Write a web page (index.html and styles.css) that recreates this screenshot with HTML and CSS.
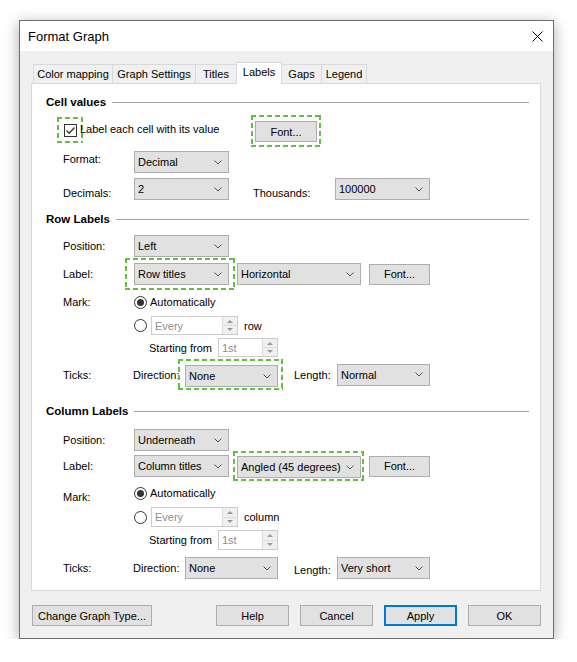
FILE: index.html
```html
<!DOCTYPE html>
<html>
<head>
<meta charset="utf-8">
<title>Format Graph</title>
<link rel="stylesheet" href="styles.css">
</head>
<body>
<div class="dialog">
  <div class="titlebar">
    <span class="title">Format Graph</span>
    <svg class="close" viewBox="0 0 11 11"><path d="M0.5 0.5 L10.5 10.5 M10.5 0.5 L0.5 10.5"/></svg>
  </div>
  <div class="body">
    <div class="tabs">
      <div class="tab t1">Color mapping</div>
      <div class="tab t2">Graph Settings</div>
      <div class="tab t3">Titles</div>
      <div class="tab t4 active">Labels</div>
      <div class="tab t5">Gaps</div>
      <div class="tab t6">Legend</div>
    </div>
    <div class="panel">
      <div class="heading">Cell values</div>
      <div class="row r-check">
        <div class="hl hl-check">
          <svg class="cb" viewBox="0 0 13 13"><rect x="0.5" y="0.5" width="12" height="12"/><polyline points="2.5,6.5 5.2,9.2 10.5,3.5"/></svg>
        </div>
        <span class="cb-text">Label each cell with its value</span>
        <div class="hl hl-font"><div class="btn w62">Font...</div></div>
      </div>
      <div class="row r-format">
        <span class="lbl hi">Format:</span>
        <div class="combo w95"><span>Decimal</span><svg class="chev" viewBox="0 0 8 5"><polyline points="0.5,0.5 4,4 7.5,0.5"/></svg></div>
      </div>
      <div class="row r-dec">
        <span class="lbl lo">Decimals:</span>
        <div class="combo w95"><span>2</span><svg class="chev" viewBox="0 0 8 5"><polyline points="0.5,0.5 4,4 7.5,0.5"/></svg></div>
        <span class="thou lo">Thousands:</span>
        <div class="combo w95"><span>100000</span><svg class="chev" viewBox="0 0 8 5"><polyline points="0.5,0.5 4,4 7.5,0.5"/></svg></div>
      </div>

      <div class="heading h2">Row Labels</div>
      <div class="row r-pos">
        <span class="lbl">Position:</span>
        <div class="combo w95"><span>Left</span><svg class="chev" viewBox="0 0 8 5"><polyline points="0.5,0.5 4,4 7.5,0.5"/></svg></div>
      </div>
      <div class="row r-label">
        <span class="lbl lbl-short">Label:</span>
        <div class="hl hl-row"><div class="combo w95"><span>Row titles</span><svg class="chev" viewBox="0 0 8 5"><polyline points="0.5,0.5 4,4 7.5,0.5"/></svg></div></div>
        <div class="combo w124 ml2"><span>Horizontal</span><svg class="chev" viewBox="0 0 8 5"><polyline points="0.5,0.5 4,4 7.5,0.5"/></svg></div>
        <div class="btn w61 ml8">Font...</div>
      </div>
      <div class="row r-mark">
        <span class="lbl">Mark:</span>
        <svg class="radio" viewBox="0 0 13 13"><circle cx="6.5" cy="6.5" r="6"/><circle class="dot" cx="6.5" cy="6.5" r="3.5"/></svg>
        <span class="auto">Automatically</span>
      </div>
      <div class="row r-every">
        <span class="lbl"></span>
        <svg class="radio" viewBox="0 0 13 13"><circle cx="6.5" cy="6.5" r="6"/></svg>
        <div class="spin w87"><span>Every</span><div class="spbtns"><div class="sp up"></div><div class="sp dn"></div></div></div>
        <span class="unit">row</span>
      </div>
      <div class="row r-start">
        <span class="lbl"></span>
        <span class="start">Starting from</span>
        <div class="spin w60"><span>1st</span><div class="spbtns"><div class="sp up"></div><div class="sp dn"></div></div></div>
      </div>
      <div class="row r-ticks">
        <span class="lbl lbl-ticks">Ticks:</span>
        <span class="dir">Direction:</span>
        <div class="hl hl-dir"><div class="combo w93"><span>None</span><svg class="chev" viewBox="0 0 8 5"><polyline points="0.5,0.5 4,4 7.5,0.5"/></svg></div></div>
        <span class="len">Length:</span>
        <div class="combo w93"><span>Normal</span><svg class="chev" viewBox="0 0 8 5"><polyline points="0.5,0.5 4,4 7.5,0.5"/></svg></div>
      </div>

      <div class="heading h3">Column Labels</div>
      <div class="row r-pos2">
        <span class="lbl">Position:</span>
        <div class="combo w95"><span>Underneath</span><svg class="chev" viewBox="0 0 8 5"><polyline points="0.5,0.5 4,4 7.5,0.5"/></svg></div>
      </div>
      <div class="row r-label2">
        <span class="lbl">Label:</span>
        <div class="combo w95"><span>Column titles</span><svg class="chev" viewBox="0 0 8 5"><polyline points="0.5,0.5 4,4 7.5,0.5"/></svg></div>
        <div class="hl hl-ang"><div class="combo w124"><span>Angled (45 degrees)</span><svg class="chev" viewBox="0 0 8 5"><polyline points="0.5,0.5 4,4 7.5,0.5"/></svg></div></div>
        <div class="btn w61 ml5">Font...</div>
      </div>
      <div class="row r-mark2">
        <span class="lbl low">Mark:</span>
        <svg class="radio" viewBox="0 0 13 13"><circle cx="6.5" cy="6.5" r="6"/><circle class="dot" cx="6.5" cy="6.5" r="3.5"/></svg>
        <span class="auto">Automatically</span>
      </div>
      <div class="row r-every2">
        <span class="lbl"></span>
        <svg class="radio" viewBox="0 0 13 13"><circle cx="6.5" cy="6.5" r="6"/></svg>
        <div class="spin w87"><span>Every</span><div class="spbtns"><div class="sp up"></div><div class="sp dn"></div></div></div>
        <span class="unit">column</span>
      </div>
      <div class="row r-start2">
        <span class="lbl"></span>
        <span class="start">Starting from</span>
        <div class="spin w60"><span>1st</span><div class="spbtns"><div class="sp up"></div><div class="sp dn"></div></div></div>
      </div>
      <div class="row r-ticks2">
        <span class="lbl lbl-ticks">Ticks:</span>
        <span class="dir2">Direction:</span>
        <div class="combo w93"><span>None</span><svg class="chev" viewBox="0 0 8 5"><polyline points="0.5,0.5 4,4 7.5,0.5"/></svg></div>
        <span class="len2 low">Length:</span>
        <div class="combo w93"><span>Very short</span><svg class="chev" viewBox="0 0 8 5"><polyline points="0.5,0.5 4,4 7.5,0.5"/></svg></div>
      </div>
    </div>
    <div class="buttons">
      <div class="btn w120">Change Graph Type...</div>
      <div class="spacer"></div>
      <div class="btn w73">Help</div>
      <div class="btn w73 ml11">Cancel</div>
      <div class="btn w73 ml11 default">Apply</div>
      <div class="btn w73 ml11">OK</div>
    </div>
  </div>
</div>
</body>
</html>
```
FILE: styles.css
```css
* { box-sizing: border-box; }
html, body { margin: 0; padding: 0; background: #ffffff; }
body {
  font-family: "Liberation Sans", Arial, sans-serif;
  font-size: 11px;
  color: #000;
}
.dialog {
  margin: 20px 0 0 19px;
  width: 535px;
  height: 619px;
  border: 1px solid #6e6e6e;
  box-shadow: 0 3px 14px rgba(0, 0, 0, 0.33);
  background: #f0f0f0;
  display: flex;
  flex-direction: column;
}
.titlebar {
  height: 30px;
  flex: none;
  background: #fff;
  display: flex;
  align-items: center;
  justify-content: space-between;
  padding: 0 10px 0 8px;
}
.title { font-size: 13px; }
.close { width: 11px; height: 11px; }
.close path { stroke: #000; stroke-width: 1; fill: none; }

.body { flex: 1; padding: 11px 12px 0 11px; }

.tabs { display: flex; align-items: flex-end; height: 21px; padding-left: 2px; }
.tab {
  height: 19px;
  border: 1px solid #d9d9d9;
  border-bottom: none;
  margin-left: -1px;
  background: #f0f0f0;
  display: flex;
  align-items: center;
  justify-content: center;
}
.t1 { margin-left: 0; width: 80px; }
.t2 { width: 84px; }
.t3 { width: 42px; }
.t4 { width: 46px; }
.t5 { width: 41px; }
.t6 { width: 46px; }
.tab.active {
  height: 22px;
  background: #fff;
  margin-bottom: -1px;
  padding-bottom: 3px;
  position: relative;
  z-index: 1;
}

.panel {
  background: #fff;
  border: 1px solid #d9d9d9;
  padding-bottom: 11px;
}
.heading {
  display: flex;
  align-items: center;
  height: 20px;
  margin: 8px 11px 0 14px;
  font-weight: bold;
  font-size: 11.5px;
}
.heading::after {
  content: "";
  flex: 1;
  height: 1px;
  background: #a0a0a0;
  margin-left: 6px;
}
.h2 { margin-top: 9px; }
.h3 { margin-top: 11px; }

.row { display: flex; align-items: center; padding-left: 31px; }
.lbl { width: 71px; flex: none; }
.lbl-short { width: 62px; }
.lbl-ticks { width: 70px; }
.hi { align-self: flex-start; padding-top: 2px; }
.lo { align-self: flex-end; padding-bottom: 1px; }
.low { align-self: flex-end; }

.r-check { padding-left: 25px; height: 32px; margin-top: 3px; align-items: flex-start; }
.r-format { margin-top: 4px; height: 22px; }
.r-dec { margin-top: 5px; height: 22px; }
.r-pos { margin-top: 6px; height: 22px; }
.r-label { margin-top: 1px; height: 32px; }
.r-mark { margin-top: 2px; height: 20px; }
.r-every { margin-top: 4px; height: 19px; }
.r-start { margin-top: 3px; height: 19px; }
.r-ticks { margin-top: 2px; height: 31px; }
.r-pos2 { margin-top: 8px; height: 22px; }
.r-label2 { margin-top: 0; height: 30px; }
.r-mark2 { margin-top: 2px; height: 20px; }
.r-every2 { margin-top: 4px; height: 20px; }
.r-start2 { margin-top: 3px; height: 20px; }
.r-ticks2 { margin-top: 7px; height: 22px; }

/* dashed highlight frames */
.hl {
  flex: none;
  --g: #5fc23f;
  background-image:
    repeating-linear-gradient(90deg, var(--g) 0 5px, transparent 5px 8px),
    repeating-linear-gradient(90deg, var(--g) 0 5px, transparent 5px 8px),
    repeating-linear-gradient(180deg, var(--g) 0 5px, transparent 5px 8px),
    repeating-linear-gradient(180deg, var(--g) 0 5px, transparent 5px 8px);
  background-size: 100% 2px, 100% 2px, 2px 100%, 2px 100%;
  background-position: left top, left bottom, left top, right top;
  background-repeat: no-repeat;
}
.hl-check { width: 26px; height: 26px; padding: 7px 0 0 7px; margin-top: 2px; }
.cb-text { width: 171px; margin-left: -3px; margin-top: 8px; flex: none; }
.hl-font { width: 70px; height: 32px; padding: 6px 0 0 4px; }
.hl-row { width: 110px; height: 32px; padding: 5px 6px 5px 9px; }
.hl-dir { width: 105px; height: 31px; padding: 6px 5px 3px 7px; }
.hl-ang { width: 131px; height: 30px; padding: 5px 3px 3px 4px; margin-left: 4px; }

.cb { width: 13px; height: 13px; display: block; }
.cb rect { fill: #fff; stroke: #333; stroke-width: 1; }
.cb polyline { fill: none; stroke: #333; stroke-width: 1.3; }

.combo {
  flex: none;
  height: 22px;
  border: 1px solid #adadad;
  background: #e1e1e1;
  display: flex;
  align-items: center;
  justify-content: space-between;
  padding: 0 6px 0 3px;
  white-space: nowrap;
}
.chev { width: 8px; height: 5px; flex: none; }
.chev polyline { fill: none; stroke: #555; stroke-width: 1; }

.btn {
  flex: none;
  height: 21px;
  border: 1px solid #adadad;
  background: #e1e1e1;
  display: flex;
  align-items: center;
  justify-content: center;
  white-space: nowrap;
}
.btn.default { border: 2px solid #0078d7; }

.w60 { width: 60px; }
.w61 { width: 61px; }
.w62 { width: 62px; }
.w73 { width: 73px; }
.w87 { width: 87px; }
.w93 { width: 93px; }
.w95 { width: 95px; }
.w120 { width: 120px; }
.w124 { width: 124px; }
.ml2 { margin-left: 2px; }
.ml5 { margin-left: 5px; }
.ml8 { margin-left: 8px; }
.ml11 { margin-left: 11px; }

.thou { margin-left: 24px; width: 82px; flex: none; }

.radio { width: 13px; height: 13px; flex: none; display: block; }
.radio circle { fill: #fff; stroke: #333; stroke-width: 1; }
.radio circle.dot { fill: #333; stroke: none; }
.auto { margin-left: 3px; }

.spin {
  flex: none;
  height: 19px;
  border: 1px solid #cccccc;
  background: #fff;
  display: flex;
  color: #8d8d8d;
  margin-left: 4px;
}
.r-start .spin, .r-start2 .spin { margin-left: 0; }
.r-every2 .spin { height: 20px; }
.r-start2 .spin { height: 20px; }
.spin > span { flex: 1; padding-left: 3px; display: flex; align-items: center; }
.spbtns {
  width: 15px;
  display: flex;
  flex-direction: column;
  background: #f0f0f0;
  border-left: 1px solid #dcdcdc;
  padding: 1px;
}
.sp { flex: 1; display: flex; align-items: center; justify-content: center; }
.sp.up { border-bottom: 1px solid #dcdcdc; }
.sp.up::after {
  content: "";
  border-left: 3px solid transparent;
  border-right: 3px solid transparent;
  border-bottom: 3px solid #9a9a9a;
}
.sp.dn::after {
  content: "";
  border-left: 3px solid transparent;
  border-right: 3px solid transparent;
  border-top: 3px solid #9a9a9a;
}
.unit { margin-left: 6px; }
.start { margin-left: 15px; width: 69px; flex: none; }

.dir { width: 45px; flex: none; }
.len { margin-left: 11px; width: 43px; flex: none; }
.dir2 { width: 52px; flex: none; }
.len2 { margin-left: 16px; width: 43px; flex: none; padding-bottom: 3px; }

.buttons { display: flex; margin-top: 14px; padding-left: 1px; }
.spacer { flex: 1; }
```
